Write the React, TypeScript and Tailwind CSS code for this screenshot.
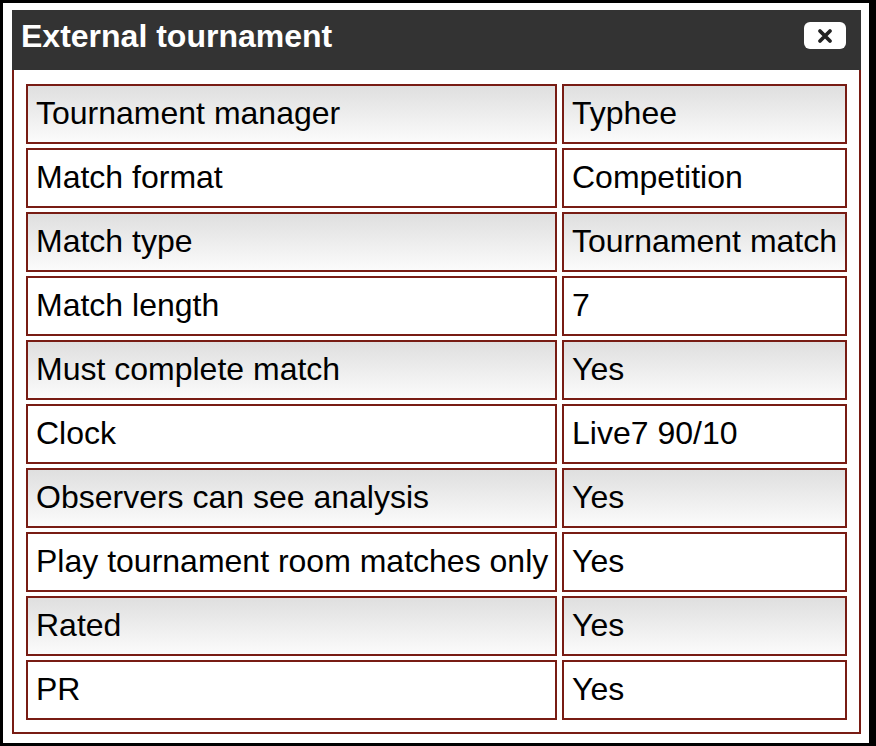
import React from 'react'

type Setting = { label: string; value: string }

const settings: Setting[] = [
  { label: 'Tournament manager', value: 'Typhee' },
  { label: 'Match format', value: 'Competition' },
  { label: 'Match type', value: 'Tournament match' },
  { label: 'Match length', value: '7' },
  { label: 'Must complete match', value: 'Yes' },
  { label: 'Clock', value: 'Live7 90/10' },
  { label: 'Observers can see analysis', value: 'Yes' },
  { label: 'Play tournament room matches only', value: 'Yes' },
  { label: 'Rated', value: 'Yes' },
  { label: 'PR', value: 'Yes' },
]

const Cell: React.FC<{ text: string; shaded: boolean }> = ({ text, shaded }) => (
  <div
    className={`h-[60px] whitespace-nowrap border-2 border-[#781c14] pl-2 pt-[9px] text-[32px] leading-[37px] text-black ${
      shaded ? 'bg-linear-to-b from-[#dfdfdf] to-[#fbfbfb]' : 'bg-white'
    }`}
  >
    {text}
  </div>
)

const App: React.FC = () => {
  return (
    <div
      className="min-h-screen bg-black pl-[3px] pt-[3px]"
      style={{ fontFamily: '"Liberation Sans", Arial, Helvetica, sans-serif' }}
    >
      <div className="h-[740px] w-[866px] bg-white pl-[9px] pt-[7px]">
        <div className="w-[849px]">
          {/* title bar */}
          <div className="flex h-[60px] items-start justify-between bg-[#333333] pl-[9px] pr-[15px]">
            <h1 className="pt-[8px] text-[32px] font-bold leading-[37px] text-white">
              External tournament
            </h1>
            <button className="mt-[12px] flex h-[27px] w-[42px] items-center justify-center rounded-[6px] bg-white">
              <svg width="18" height="18" viewBox="0 0 18 18">
                <path
                  d="M4 4 L14 14 M14 4 L4 14"
                  stroke="#222"
                  strokeWidth="3.8"
                  strokeLinecap="round"
                />
              </svg>
            </button>
          </div>

          {/* settings table */}
          <div className="border-2 border-t-0 border-[#781c14] px-[12px] pb-[12px] pt-[14px]">
            <div className="grid grid-cols-[531px_285px] gap-x-[5px] gap-y-[4px]">
              {settings.map((s, i) => (
                <React.Fragment key={s.label}>
                  <Cell text={s.label} shaded={i % 2 === 0} />
                  <Cell text={s.value} shaded={i % 2 === 0} />
                </React.Fragment>
              ))}
            </div>
          </div>
        </div>
      </div>
    </div>
  )
}

export default App
